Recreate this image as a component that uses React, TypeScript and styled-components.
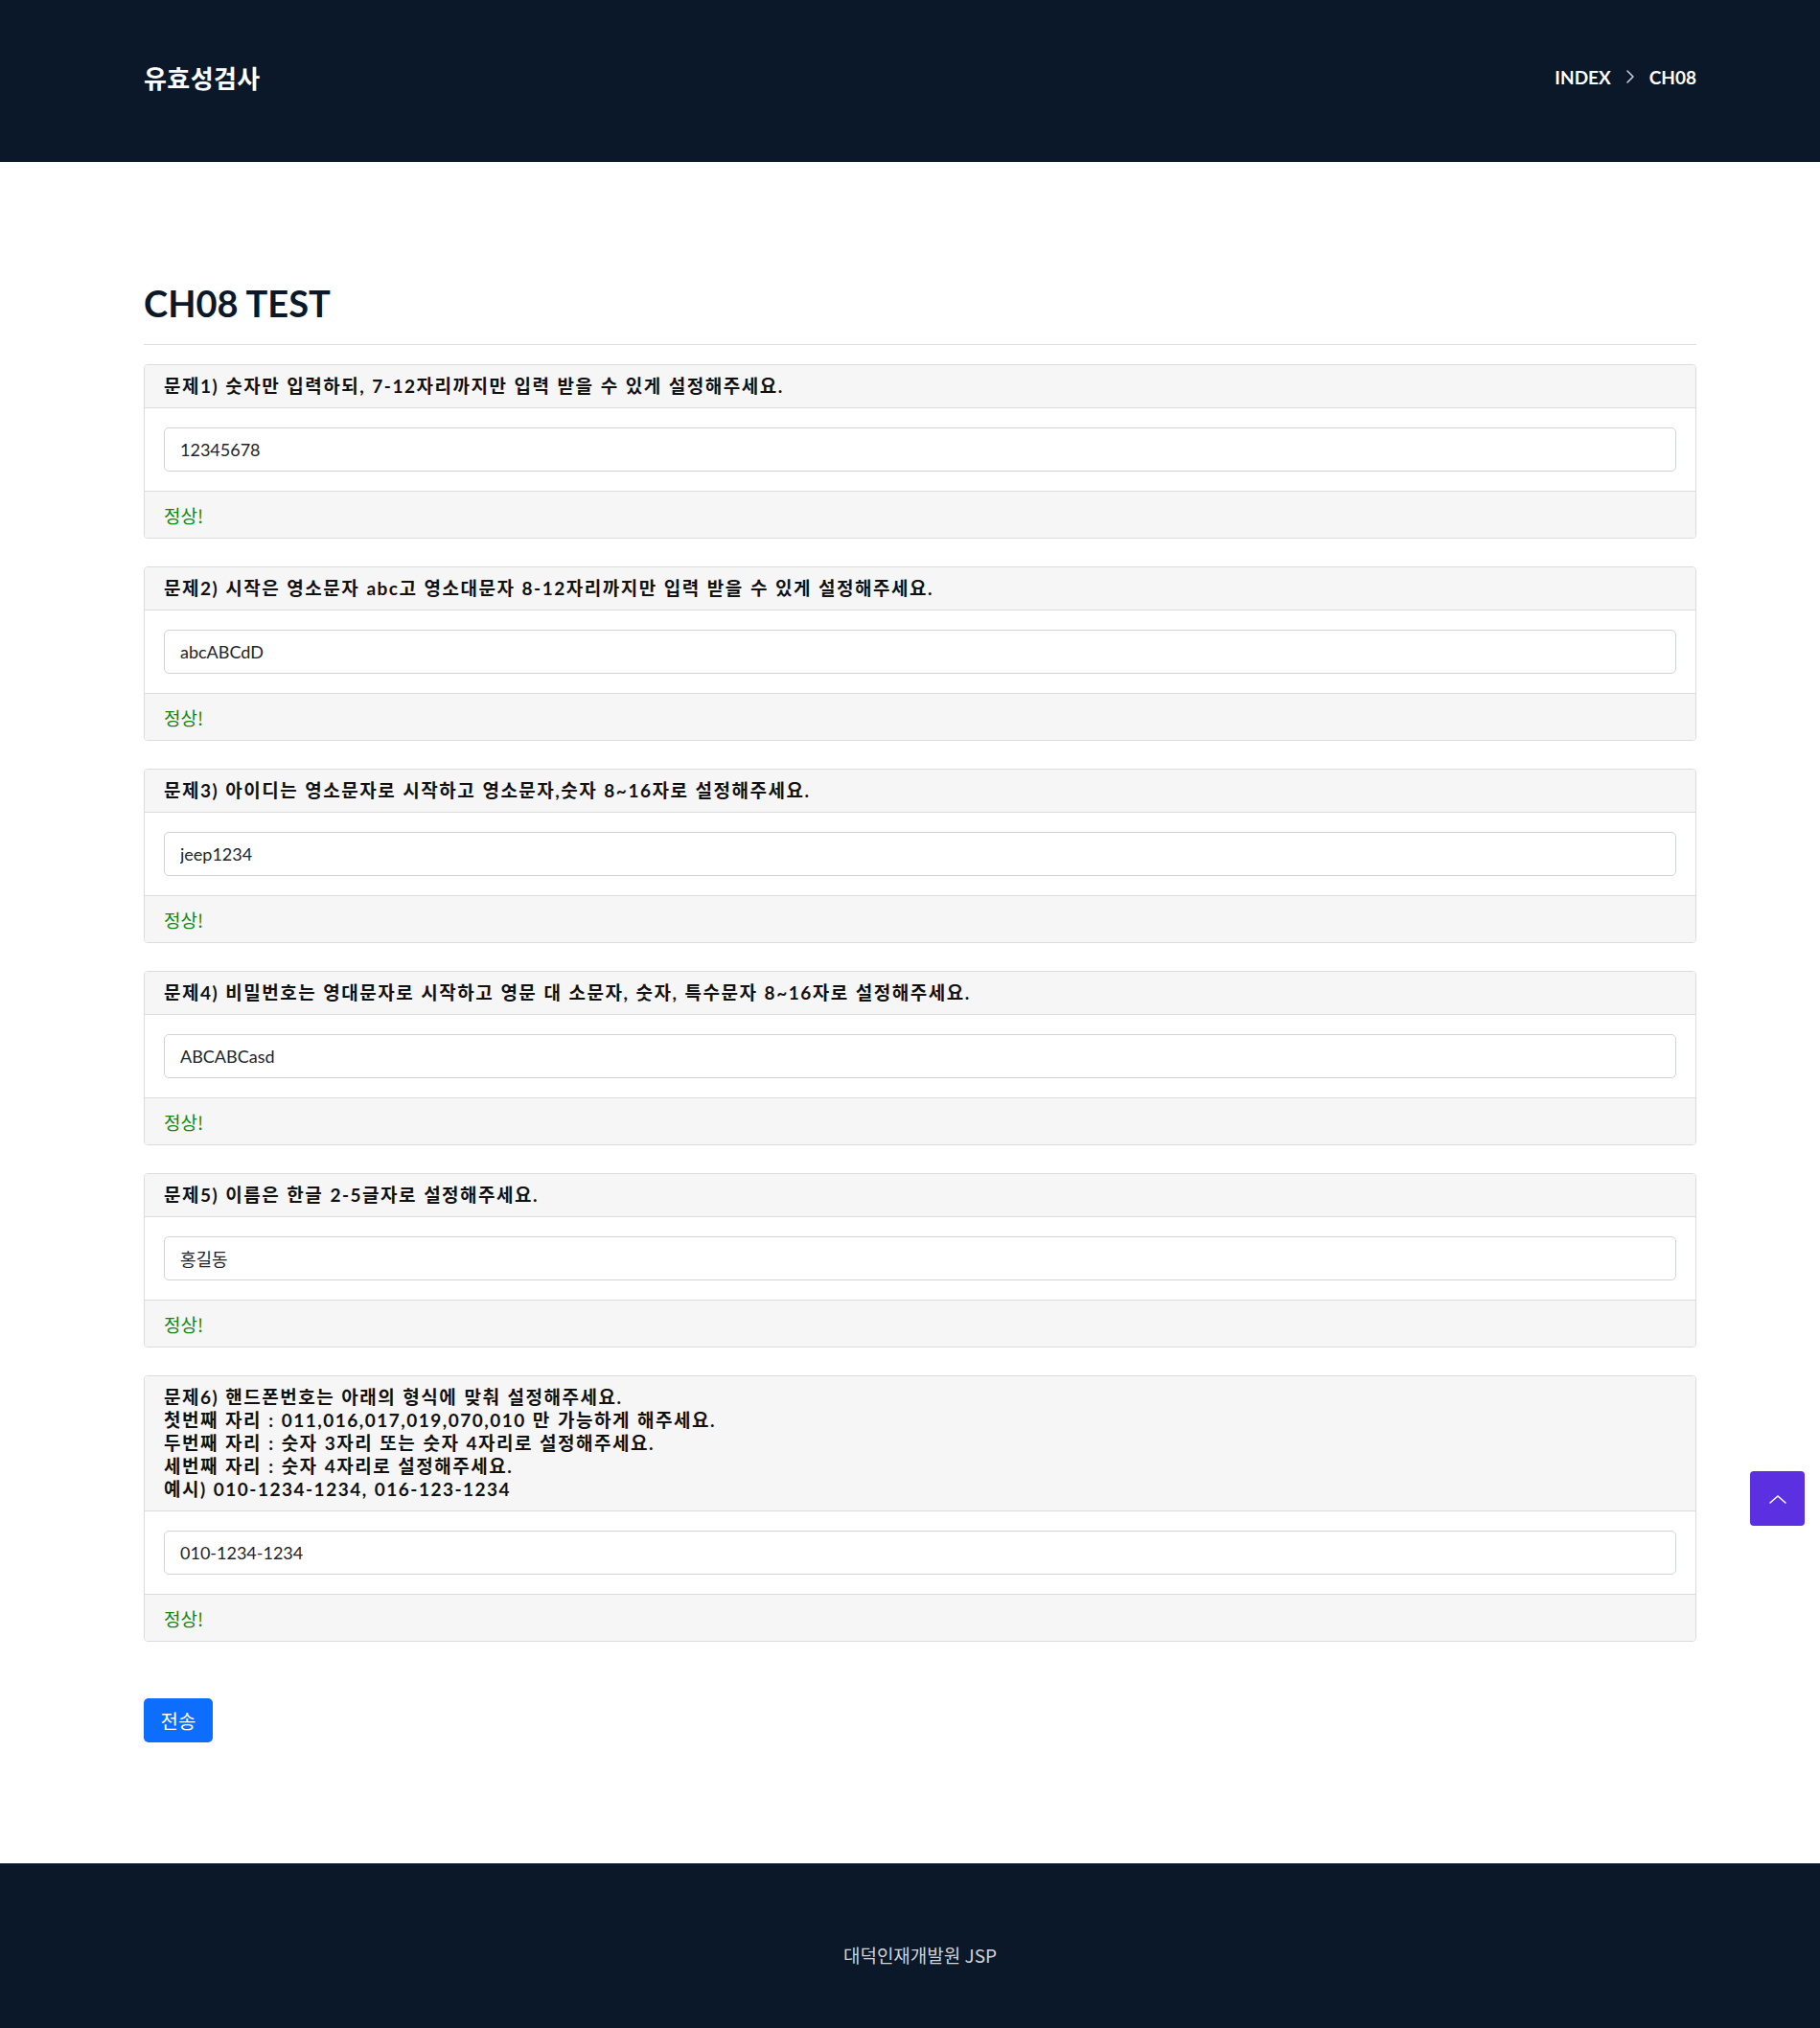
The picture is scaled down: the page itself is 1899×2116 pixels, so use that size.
import React from "react";
import styled, { createGlobalStyle } from "styled-components";

const GlobalStyle = createGlobalStyle`
  html, body { margin: 0; padding: 0; background: #ffffff; }
  body {
    font-family: "Lato", "Noto Sans CJK KR", sans-serif;
    color: #212529;
  }
  * { box-sizing: border-box; }
`;

const Page = styled.div`
  position: relative;
  min-height: 2116px;
  display: flex;
  flex-direction: column;
`;

const Container = styled.div`
  width: 1620px;
  margin-left: 150px;
`;

const TopBar = styled.header`
  background: #0a1829;
  height: 169px;
`;

const TopInner = styled(Container)`
  height: 100%;
  display: flex;
  align-items: center;
  justify-content: space-between;
  padding-bottom: 9px;
`;

const Brand = styled.h1`
  margin: 0;
  font-family: "Noto Sans CJK KR", sans-serif;
  font-size: 26px;
  font-weight: 700;
  color: #ffffff;
  letter-spacing: 0.4px;
`;

const Crumbs = styled.nav`
  display: flex;
  align-items: center;
  gap: 15px;
  font-family: "Lato", sans-serif;
  font-size: 19px;
  font-weight: 700;
  color: #ffffff;
`;

const CrumbLink = styled.span`
  color: #ffffff;
`;

const Main = styled.main`
  flex: 1;
  padding-top: 124px;
  padding-bottom: 126px;
`;

const Title = styled.h2`
  margin: 0;
  font-family: "Lato", sans-serif;
  font-size: 38px;
  line-height: 46px;
  font-weight: 700;
  color: #0a1829;
`;

const Rule = styled.hr`
  margin: 20px 0 20px;
  border: 0;
  border-top: 1px solid #dedede;
`;

const Form = styled.form`
  display: flex;
  flex-direction: column;
  gap: 29px;
`;

const Card = styled.section`
  border: 1px solid #dcdcdc;
  border-radius: 4px;
  overflow: hidden;
  background: #ffffff;
`;

const CardHead = styled.div`
  background: #f6f6f6;
  border-bottom: 1px solid #dcdcdc;
  padding: 10px 20px;
  font-family: "Lato", "Noto Sans CJK KR", sans-serif;
  font-size: 19px;
  line-height: 24px;
  font-weight: 700;
  letter-spacing: 1.5px;
  word-spacing: 1px;
  color: #111;
  white-space: pre-line;
`;

const CardBody = styled.div`
  padding: 20px 20px;
`;

const Field = styled.input`
  display: block;
  width: 100%;
  height: 46px;
  padding: 0 16px;
  border: 1px solid #d0d3d8;
  border-radius: 5px;
  font-family: "Lato", "Noto Sans CJK KR", sans-serif;
  font-size: 18px;
  color: #212529;
  background: #fff;
  outline: none;
`;

const CardFoot = styled.div`
  background: #f6f6f6;
  border-top: 1px solid #dcdcdc;
  height: 49px;
  padding: 0 20px;
  display: flex;
  align-items: center;
  font-family: "Noto Sans CJK KR", sans-serif;
  font-size: 19px;
  font-weight: 400;
  color: #118811;
`;

const SubmitRow = styled.div`
  margin-top: 59px;
`;

const Submit = styled.button`
  width: 72px;
  height: 46px;
  border: 0;
  border-radius: 5px;
  background: #0d6efd;
  color: #ffffff;
  font-family: "Noto Sans CJK KR", sans-serif;
  font-size: 20px;
  cursor: pointer;
`;

const Bottom = styled.footer`
  background: #0a1829;
  border-top: 1px solid #3b4450;
  height: 172px;
  display: flex;
  align-items: center;
`;

const BottomText = styled(Container)`
  text-align: center;
  font-family: "Noto Sans CJK KR", sans-serif;
  font-size: 19px;
  color: #d0d3d8;
  padding-top: 17px;
`;

const ToTop = styled.a`
  position: absolute;
  top: 1535px;
  right: 16px;
  width: 57px;
  height: 57px;
  border-radius: 4px;
  background: #5a30e0;
  display: flex;
  align-items: center;
  justify-content: center;
`;

const questions = [
  { q: "문제1) 숫자만 입력하되, 7-12자리까지만 입력 받을 수 있게 설정해주세요.", v: "12345678" },
  { q: "문제2) 시작은 영소문자 abc고 영소대문자 8-12자리까지만 입력 받을 수 있게 설정해주세요.", v: "abcABCdD" },
  { q: "문제3) 아이디는 영소문자로 시작하고 영소문자,숫자 8~16자로 설정해주세요.", v: "jeep1234" },
  { q: "문제4) 비밀번호는 영대문자로 시작하고 영문 대 소문자, 숫자, 특수문자 8~16자로 설정해주세요.", v: "ABCABCasd" },
  { q: "문제5) 이름은 한글 2-5글자로 설정해주세요.", v: "홍길동" },
  {
    q: "문제6) 핸드폰번호는 아래의 형식에 맞춰 설정해주세요.\n첫번째 자리 : 011,016,017,019,070,010 만 가능하게 해주세요.\n두번째 자리 : 숫자 3자리 또는 숫자 4자리로 설정해주세요.\n세번째 자리 : 숫자 4자리로 설정해주세요.\n예시) 010-1234-1234, 016-123-1234",
    v: "010-1234-1234",
  },
];

export default function App() {
  return (
    <Page>
      <GlobalStyle />
      <TopBar>
        <TopInner>
          <Brand>유효성검사</Brand>
          <Crumbs>
            <CrumbLink>INDEX</CrumbLink>
            <svg width="10" height="16" viewBox="0 0 10 16" fill="none">
              <path d="M2 2l6 6-6 6" stroke="#c9ccd2" strokeWidth="1.6" strokeLinecap="round" strokeLinejoin="round" />
            </svg>
            <CrumbLink>CH08</CrumbLink>
          </Crumbs>
        </TopInner>
      </TopBar>
      <Main>
        <Container>
          <Title>CH08 TEST</Title>
          <Rule />
          <Form onSubmit={(e) => e.preventDefault()}>
            {questions.map((item, i) => (
              <Card key={i}>
                <CardHead>{item.q}</CardHead>
                <CardBody>
                  <Field type="text" defaultValue={item.v} />
                </CardBody>
                <CardFoot>정상!</CardFoot>
              </Card>
            ))}
          </Form>
          <SubmitRow>
            <Submit type="button">전송</Submit>
          </SubmitRow>
        </Container>
      </Main>
      <Bottom>
        <BottomText>대덕인재개발원 JSP</BottomText>
      </Bottom>
      <ToTop href="#">
        <svg width="20" height="12" viewBox="0 0 20 12" fill="none">
          <path d="M2 10l8-7 8 7" stroke="#ffffff" strokeWidth="1.6" strokeLinecap="round" strokeLinejoin="round" />
        </svg>
      </ToTop>
    </Page>
  );
}
